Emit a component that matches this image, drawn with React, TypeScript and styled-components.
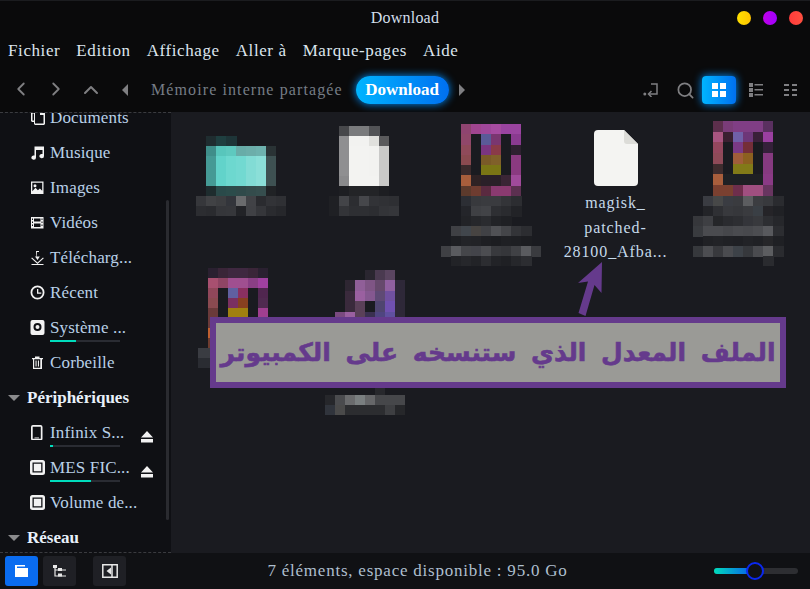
import React from 'react';
import styled, { createGlobalStyle } from 'styled-components';
import { ChevronLeft, ChevronRight, ChevronUp, Search } from 'lucide-react';

const GlobalStyle = createGlobalStyle`
  html, body {
    margin: 0;
    padding: 0;
    background: #0a0a0b;
  }
  * {
    box-sizing: border-box;
  }
`;

const FONT = `'Liberation Serif', 'Times New Roman', serif`;

const Window = styled.div`
  width: 810px;
  height: 589px;
  display: flex;
  flex-direction: column;
  overflow: hidden;
  background: #0a0a0b;
  border-top: 1px solid #1b1c1f;
  font-family: ${FONT};
  color: #d3dfec;
`;

const TitleBar = styled.header`
  height: 33px;
  flex: none;
  display: flex;
  align-items: center;
  justify-content: center;
  position: relative;
`;

const Title = styled.h1`
  margin: 0;
  font-size: 16px;
  font-weight: 400;
  letter-spacing: 0.2px;
`;

const Dots = styled.div`
  position: absolute;
  right: 7px;
  top: 10px;
  display: flex;
  gap: 12px;
`;

const Dot = styled.span<{ $color: string }>`
  width: 14px;
  height: 14px;
  border-radius: 50%;
  background: ${(p) => p.$color};
`;

const MenuBar = styled.nav`
  height: 34px;
  flex: none;
  display: flex;
  align-items: center;
  padding-left: 8px;
  gap: 16px;
`;

const MenuItem = styled.span`
  font-size: 17px;
  letter-spacing: 0.6px;
  color: #dce5ee;
`;

const Toolbar = styled.div`
  height: 44px;
  flex: none;
  display: flex;
  align-items: center;
  color: #7f7f82;
`;

const NavButton = styled.span`
  width: 35px;
  display: flex;
  justify-content: center;
`;

const NavGroup = styled.div`
  display: flex;
  padding: 0 13px 0 3px;
`;

const Caret = styled.svg`
  flex: none;
  width: 8px;
  height: 14px;
  fill: #7f7f82;
`;

const Crumb = styled.span`
  font-size: 16px;
  letter-spacing: 1.1px;
  color: #767d86;
  margin: 0 13px 0 22px;
`;

const ActiveCrumb = styled.span`
  width: 93px;
  height: 28px;
  border-radius: 14px;
  display: flex;
  align-items: center;
  justify-content: center;
  font-size: 17px;
  font-weight: 700;
  color: #fff;
  background: linear-gradient(90deg, #00b4ff, #0070f0);
  box-shadow: 0 0 8px #0090ff;
  margin-right: 9px;
`;

const ToolGroup = styled.div`
  margin-left: auto;
  display: flex;
  align-items: center;
  padding-right: 3px;
`;

const ToolButton = styled.span<{ $active?: boolean }>`
  width: 34px;
  height: 28px;
  margin-right: ${(p) => (p.$active ? '3px' : '0')};
  border-radius: 4px;
  display: flex;
  align-items: center;
  justify-content: center;
  color: ${(p) => (p.$active ? '#fff' : '#7f7f82')};
  background: ${(p) => (p.$active ? 'linear-gradient(90deg, #00b4ff, #0070f0)' : 'none')};
  box-shadow: ${(p) => (p.$active ? '0 0 8px #0090ff' : 'none')};
`;

const Body = styled.div`
  flex: 1;
  min-height: 0;
  display: flex;
`;

const Sidebar = styled.aside`
  width: 171px;
  flex: none;
  position: relative;
  overflow: hidden;
  background: #0f1014;
  border-top: 1px dashed #3a3b3f;
  border-bottom: 1px dashed #3a3b3f;
`;

const SideList = styled.ul`
  list-style: none;
  margin: -13px 0 0;
  padding: 0;
`;

const SideRow = styled.li`
  height: 35px;
  display: flex;
  align-items: center;
  padding-left: 30px;
  position: relative;
`;

const SideIcon = styled.svg`
  width: 15px;
  height: 15px;
  flex: none;
  margin-right: 5px;
  fill: #f2f2f2;
`;

const SideText = styled.span`
  font-size: 17px;
  letter-spacing: 0.15px;
  color: #b9d0e8;
  white-space: nowrap;
`;

const SideHeader = styled.li`
  height: 35px;
  display: flex;
  align-items: center;
  padding-left: 8px;
  font-size: 17px;
  font-weight: 700;
  color: #e8f0fa;
`;

const HeaderCaret = styled.span`
  width: 0;
  height: 0;
  border-left: 6px solid transparent;
  border-right: 6px solid transparent;
  border-top: 6px solid #8a8a8c;
  margin-right: 7px;
`;

const Usage = styled.div`
  position: absolute;
  left: 50px;
  bottom: 3px;
  width: 70px;
  height: 2px;
  background: #2a2c33;
`;

const UsageFill = styled.div`
  height: 100%;
  background: #00dcbc;
`;

const Eject = styled.svg`
  position: absolute;
  left: 140px;
  top: 15px;
  width: 14px;
  height: 14px;
  fill: #f2f2f2;
`;

const Scrollbar = styled.div`
  position: absolute;
  left: 166px;
  top: 87px;
  width: 3px;
  height: 320px;
  border-radius: 2px;
  background: #2a2b30;
`;

const Main = styled.main`
  flex: 1;
  position: relative;
  overflow: hidden;
  padding: 4px 0 0 7px;
  background: #1a1b20;
`;

const FileGrid = styled.div`
  display: grid;
  grid-template-columns: repeat(5, 125px);
  grid-template-rows: 152px auto;
  align-items: start;
`;

const FileCell = styled.div`
  display: flex;
  flex-direction: column;
  align-items: center;
`;

const IconSlot = styled.div`
  height: 80px;
  display: flex;
  align-items: flex-end;
`;

const PageIcon = styled.svg`
  width: 44px;
  height: 56px;
  margin-bottom: 10px;
`;

const FileName = styled.span`
  width: 122px;
  text-align: center;
  font-size: 16px;
  line-height: 24.5px;
  letter-spacing: 0.9px;
  color: #c5d9ea;
  margin-top: -5px;
`;

const Notice = styled.div`
  position: absolute;
  left: 39px;
  top: 205px;
  width: 576px;
  height: 71px;
  display: flex;
  align-items: center;
  justify-content: center;
  border: 6px solid #653a8c;
  background: #9a9a96;
  color: #653a8c;
  font-family: 'DejaVu Sans', sans-serif;
  font-size: 25px;
  font-weight: 700;
  word-spacing: 6px;
  white-space: nowrap;
  -webkit-text-stroke: 0.6px #653a8c;
`;

const Arrow = styled.svg`
  position: absolute;
  left: 400px;
  top: 145px;
  width: 40px;
  height: 65px;
`;

const StatusBar = styled.footer`
  height: 36px;
  flex: none;
  display: flex;
  align-items: center;
  padding-left: 5px;
  background: #101114;
`;

const StatusButton = styled.span<{ $active?: boolean; $gap: number }>`
  width: 33px;
  height: 30px;
  border-radius: 3px;
  display: flex;
  align-items: center;
  justify-content: center;
  background: ${(p) => (p.$active ? '#0a6cf0' : '#1f2025')};
  margin-right: ${(p) => p.$gap}px;
  flex: none;
`;

const StatusText = styled.span`
  position: absolute;
  left: 125px;
  right: 100px;
  text-align: center;
  font-size: 17px;
  letter-spacing: 0.77px;
  color: #aebfce;
`;

const Slider = styled.div`
  position: absolute;
  left: 714px;
  width: 84px;
  height: 6px;
  border-radius: 3px;
  background: #2d2e32;
`;

const SliderFill = styled.div`
  width: 42px;
  height: 100%;
  border-radius: 3px;
  background: linear-gradient(90deg, #00dcbc, #0a50f0);
`;

const SliderKnob = styled.span`
  position: absolute;
  left: 32px;
  top: -6px;
  width: 18px;
  height: 18px;
  border-radius: 50%;
  border: 2.5px solid #0a28f0;
  background: #101114;
`;

const MosaicSvg = styled.svg<{ $nudge: number; $top: number }>`
  display: block;
  flex: none;
  margin-left: ${(p) => p.$nudge}px;
  margin-top: ${(p) => p.$top}px;
`;

const _ = 'none';

// rows of blurred squares, the same 10px grid the censored picture uses
const Mosaic = ({
  rows,
  nudge = 0,
  top = 0,
  cellH = 10,
}: {
  rows: string[][];
  nudge?: number;
  top?: number;
  cellH?: number;
}) => {
  const cols = rows[0].length;
  const h = rows.length * cellH;
  return (
    <MosaicSvg
      $nudge={nudge}
      $top={top}
      width={cols * 10}
      height={h}
      viewBox={`0 0 ${cols * 10} ${h}`}
      shapeRendering='crispEdges'
    >
      {rows.map((row, y) =>
        row.map((color, x) =>
          color === _ ? null : (
            <rect key={`${x}-${y}`} x={x * 10} y={y * cellH} width={10.5} height={cellH + 0.5} fill={color} />
          ),
        ),
      )}
    </MosaicSvg>
  );
};

const folderIcon = [
  ['#1f2d30', '#1f3f40', '#1e3538', _, _, _, _],
  ['#3f8e8a', '#58c6bc', '#5ec9bf', '#68aca8', '#6caeaa', '#6eb2ae', '#2a3335'],
  ['#459a95', '#62d3ca', '#6dd8cf', '#72d9d1', '#82dcd5', '#8bdfd8', '#3e5152'],
  ['#459a95', '#62d3ca', '#6dd8cf', '#72d9d1', '#82dcd5', '#8bdfd8', '#3e5152'],
  ['#459a95', '#62d3ca', '#6dd8cf', '#72d9d1', '#82dcd5', '#8bdfd8', '#3e5152'],
  ['#1e2c2e', '#2a4a4a', '#2c4c4b', '#304a4a', '#344c4c', '#364e4e', '#202225'],
];
const folderLabel = [
  ['#36373b', '#414245', '#3d3e41', '#33353b', '#6a6b6d', '#414246', '#2a2b2f', '#323337', '#2f3034'],
  ['#2c2d31', '#2a2b2f', '#35363a', '#36373b', '#222327', '#404145', '#35363a', '#2a2b2f', '#26272b'],
];
const docIcon = [
  ['#47484b', '#7a7b7d', '#7a7b7d', '#525356', _],
  ['#8f8f91', '#f2f2f0', '#f2f2f0', '#e0e0dd', '#5a5a5c'],
  ['#8f8f91', '#f3f3f1', '#f3f3f1', '#f2f2f0', '#c9c9c8'],
  ['#8f8f91', '#f3f3f1', '#f3f3f1', '#f2f2f0', '#c9c9c8'],
  ['#8f8f91', '#f3f3f1', '#f3f3f1', '#f2f2f0', '#c9c9c8'],
  ['#8a8a8c', '#f3f3f1', '#f3f3f1', '#f3f3f1', '#c9c9c8'],
  ['#1d1e22', '#232427', '#232427', '#232427', '#1d1e22'],
];
const docLabel = [
  ['#1f2024', '#434448', '#2c2d31', '#46474b', '#323337', '#303135', '#2e2f33'],
  ['#1f2024', '#333438', '#2e2f33', '#2e2f33', '#2c2d31', '#333438', '#35363a'],
];
const thumbA = [
  ['#8f4470', '#a0458f', '#a0479a', '#a64ba0', '#9a44a0', '#9a44a0'],
  ['#90476a', '#1a1b20', '#5a5a98', '#7a3670', '#1a1b20', '#8a3a90'],
  ['#8f4a5a', '#1a1b20', '#7a3580', '#8a3a48', '#1a1b20', '#2e2030'],
  ['#8a4a50', '#1a1b20', '#7a5a28', '#80602a', '#1a1b20', '#8a3a80'],
  ['#3a2a2c', '#1a1b20', '#7a7515', '#7a7515', '#1a1b20', '#8a3a80'],
  ['#a85e3c', '#2e2224', '#2a2028', '#2a2028', '#3a2535', '#a04a9a'],
  ['#5c3a2c', '#6e3c30', '#5a2a40', '#8a3a70', '#8a3a70', '#5c3050'],
];
const labelA = [
  [_, _, '#2c2e34', '#38393d', '#3a3b3f', '#3a3b3f', '#333438', '#2c2d31', _, _],
  [_, _, '#24252a', '#3f4044', '#424347', '#2e2f33', '#2a2b2f', '#222327', _, _],
  [_, _, '#222327', '#26272b', '#2a2b2f', '#222327', '#1f2024', _, _, _],
  [_, '#3f4044', '#41464c', '#474442', '#404145', '#505155', '#444549', '#333438', '#2c2d31', _],
  [_, '#1e1f23', '#232428', '#222327', '#1e1f23', '#1c1d21', '#1f2024', '#1e1f23', '#1c1d21', _],
  ['#3f4044', '#5a5b5f', '#45464a', '#43444a', '#4c4d51', '#38393d', '#35363a', '#404145', '#5a5b5f', '#3a3b3f'],
  [_, '#222327', '#26272b', '#222327', '#2c2d31', '#222327', '#1f2024', '#26272b', '#2c2d31', _],
];
const thumbB = [
  ['#5c2f4c', '#7a3c78', '#803e85', '#803e85', '#803e85', '#5a3060'],
  ['#a85580', '#3a2030', '#7060a8', '#6d3678', '#3a2038', '#9a3fa0'],
  ['#94475e', '#1a1b20', '#7a3a85', '#742e38', '#1a1b20', '#35203a'],
  ['#8e4a58', '#1a1b20', '#a05e3a', '#8c6020', '#1a1b20', '#863a80'],
  ['#3e2c2e', '#1a1b20', '#827a18', '#827a18', '#1a1b20', '#863a80'],
  ['#a85e3c', '#1e2024', '#1e2024', '#1e2024', '#1e2024', '#8a3a85'],
  ['#7a4030', '#7a4030', '#6e2e4c', '#a04f80', '#a04f80', '#683560'],
];
const labelB = [
  [_, '#3a3c42', '#474848', '#3a3c42', '#3a3b3f', '#5c5d60', '#3c3d41', '#38393d', '#2a2b2f', _],
  [_, '#232428', '#2f3034', '#38393d', '#36373b', '#3a3b3f', '#3a3f45', '#252428', '#202125', _],
  ['#36373b', '#3e3f43', '#252629', '#2a2b2f', '#2d2e32', '#34353a', '#38393d', '#2d2e32', '#26272b', _],
  ['#393b3f', '#4a4b4f', '#4a4b4f', '#46474b', '#4a4b4f', '#48494d', '#4c4d51', '#58595d', '#2c2d31', _],
  [_, '#202125', '#222327', '#202125', '#1f2024', '#222327', '#202125', '#262629', '#1f2024', _],
  ['#36383c', '#4c4d51', '#38393d', '#4a4b4f', '#3d4248', '#36383c', '#4a4b4f', '#5c5d60', '#2a2b2f', _],
  [_, _, _, _, _, _, _, '#2a2b2f', _, _],
];
const thumbC = [
  ['#2a2030', '#3a2538', '#3f2840', '#3f2840', '#3a2538', '#2a2030'],
  ['#a85070', '#904565', '#a04f90', '#a04f90', '#8a3f85', '#a040a0'],
  ['#90475a', '#1a1b20', '#6060a0', '#8a3060', '#1a1b20', '#50264f'],
  ['#8a4a50', '#1a1b20', '#7a3060', '#884020', '#1a1b20', '#502a50'],
  ['#6a3a3a', '#1a1b20', '#a08010', '#a08010', '#1a1b20', '#a03f90'],
  ['#6a3a3a', '#1a1b20', '#1a1b20', '#1a1b20', '#1a1b20', '#a03f90'],
  ['#c06030', '#6e3c30', '#6e3c30', '#8a3a70', '#8a3a70', '#5c3050'],
  ['#6e3c30', '#6e3c30', '#6e3c30', '#8a3a70', '#8a3a70', '#5c3050'],
];
const labelC = [
  ['#3a3c42', '#3a3c42', '#3a3b3f', '#3a3b3f', '#3a3b3f', '#333438', '#2c2d31'],
  ['#2a2c32', '#2a2c32', '#2f3034', '#2f3034', '#2f3034', '#2c2d31', '#222327'],
];
const fillerD = ['#3a2a3c', '#3a2a3c', '#5a4058', '#5a4058', '#4f4580', '#6050a0', '#2e2838'];
const thumbD = [
  [_, _, _, '#2a2630', '#4a3a50', '#5a4560', _],
  [_, '#2e2632', '#905f98', '#7f5585', '#66496c', '#9060a0', '#2e2838'],
  [_, '#3a2a3c', '#9a60a0', '#855890', '#5f4a75', '#7050a0', '#2e2838'],
  [_, '#3a2a3c', '#5a4058', '#1a1b20', '#4f4570', '#7050b0', '#2e2838'],
  ['#7a4a80', '#9a60a0', '#5a4058', '#3a3050', '#4f4580', '#6050a0', '#2e2838'],
  fillerD,
  fillerD,
  fillerD,
  fillerD,
  fillerD,
  fillerD,
  [_, _, _, _, '#27282c', _, _],
];
const labelD = [
  ['#26272b', '#4a4b4e', '#6a6b6d', '#7a7f80', '#666769', '#46474a', '#46474a', '#46474a'],
  ['#30343c', '#4a4a4a', '#2c2d30', '#2c2d30', '#2c2d30', '#2c2d30', '#3e3f42', '#26272a'],
];

const NavCaret = ({ left }: { left?: boolean }) => (
  <Caret viewBox='0 0 8 14'>
    <path d={left ? 'M7 1v12L1 7z' : 'M1 1v12l6-6z'} />
  </Caret>
);

const icons: Record<string, React.ReactNode> = {
  documents: (
    <path fillRule='evenodd' d='M5 0h8.5l1.5 1.5V14l-1 1H5l-1-1v-2H2l-1-1V3l1-1h2V1zm0 1.5V13.5h8.5V5H10V1.5zM2.5 3.5v7H4v-7z' />
  ),
  music: <path d='M4.500 1.500h9.500V11a2.300 2.100 0 1 1-1.500-1.900V5H6V12.500a2.300 2.100 0 1 1-1.500-1.900z' />,
  image: (
    <path fillRule='evenodd' d='M1 1.500h12.500v12.500H1zm1.300 1.300v8.500l3.200-3.600 2.400 2.500 2-1.800 2.300 2.400V2.800zM5 4.200a1.500 1.500 0 1 1 0 3 1.500 1.500 0 0 1 0-3z' />
  ),
  video: (
    <path fillRule='evenodd' d='M1 2h12.500v11.500H1zm3 1.500v3h6.500v-3zm0 5v3.500h6.500V8.500zM2 3.500V5h1V3.500zm0 3V8h1V6.500zm0 3V11h1V9.500zm9.500-6V5h1V3.500zm0 3V8h1V6.500zm0 3V11h1V9.500z' />
  ),
  download: (
    <path d='M6 1h3v1H7v4.500h2.800L7.500 10 5 6.500h1.500zM2 7.500l5.500 5 5.500-5 .8.800-6.300 5.700-6.300-5.700zM1.500 14h12v1h-12z' />
  ),
  clock: (
    <path fillRule='evenodd' d='M7.500.5a7 7 0 1 1 0 14 7 7 0 0 1 0-14zm0 1.800a5.200 5.200 0 1 0 0 10.400 5.200 5.200 0 0 0 0-10.400zM7 4h1.300v3.500h3v1.200H7z' />
  ),
  disk: (
    <path fillRule='evenodd' d='M2.500 0h10A2 2 0 0 1 14.500 2v11a2 2 0 0 1-2 2h-10a2 2 0 0 1-2-2V2a2 2 0 0 1 2-2zM7.500 3a4 4 0 1 0 0 8 4 4 0 0 0 0-8zm0 2a2 2 0 1 1 0 4 2 2 0 0 1 0-4z' />
  ),
  trash: (
    <path fillRule='evenodd' d='M5 1.500h4.500v1.500h3.500v1.200h-1V14H3V4.200H2V3h3zM4.200 4.200v8.600h6.100V4.200zM5.500 5.500h1.100v6H5.500zm2.400 0H9v6H7.900z' />
  ),
  phone: (
    <path fillRule='evenodd' d='M3 0h7.500a2 2 0 0 1 2 2v11.500a2 2 0 0 1-2 2H3a2 2 0 0 1-2-2V2a2 2 0 0 1 2-2zm-.300 1.800v12h8.100v-12zM4.500 12.500h4.500v.7H4.500z' />
  ),
  card: (
    <path fillRule='evenodd' d='M2.500 0h10A2.500 2.500 0 0 1 15 2.500v10a2.500 2.500 0 0 1-2.500 2.500h-10A2.500 2.500 0 0 1 0 12.500v-10A2.500 2.500 0 0 1 2.500 0zM2.500 2.500v10h10v-10zM3.800 3.800h7.400v7.400H3.800z' />
  ),
};

const SideItem = ({
  icon,
  label,
  usage,
  eject,
}: {
  icon: string;
  label: string;
  usage?: number;
  eject?: boolean;
}) => (
  <SideRow>
    <SideIcon viewBox='0 0 15 15'>{icons[icon]}</SideIcon>
    <SideText>{label}</SideText>
    {usage !== undefined && (
      <Usage>
        <UsageFill style={{ width: `${usage}%` }} />
      </Usage>
    )}
    {eject && (
      <Eject viewBox='0 0 14 14'>
        <path d='M7 1l6 6.500H1zM1 9h12v3.500H1z' />
      </Eject>
    )}
  </SideRow>
);

const App = () => {
  return (
    <Window>
      <GlobalStyle />
      <TitleBar>
        <Title>Download</Title>
        <Dots>
          <Dot $color='linear-gradient(90deg, #ffe000, #ffc400)' />
          <Dot $color='linear-gradient(90deg, #c000e8, #a000ff)' />
          <Dot $color='linear-gradient(90deg, #ff3b3b, #ff5040)' />
        </Dots>
      </TitleBar>
      <MenuBar>
        <MenuItem>Fichier</MenuItem>
        <MenuItem>Edition</MenuItem>
        <MenuItem>Affichage</MenuItem>
        <MenuItem>Aller à</MenuItem>
        <MenuItem>Marque-pages</MenuItem>
        <MenuItem>Aide</MenuItem>
      </MenuBar>
      <Toolbar>
        <NavGroup>
          <NavButton>
            <ChevronLeft size={22} strokeWidth={2} />
          </NavButton>
          <NavButton>
            <ChevronRight size={22} strokeWidth={2} />
          </NavButton>
          <NavButton>
            <ChevronUp size={24} strokeWidth={2} />
          </NavButton>
        </NavGroup>
        <NavCaret left />
        <Crumb>Mémoire interne partagée</Crumb>
        <ActiveCrumb>Download</ActiveCrumb>
        <NavCaret />
        <ToolGroup>
          <ToolButton>
            <svg width='16' height='14' viewBox='0 0 16 14' fill='none' stroke='currentColor' strokeWidth='1.5'>
              <path d='M8 1h6v10H6' />
              <path d='M8.500 8L5.500 11l3 3' />
              <circle cx='1.800' cy='11' r='1.500' fill='currentColor' stroke='none' />
            </svg>
          </ToolButton>
          <ToolButton>
            <Search size={19} strokeWidth={2.2} />
          </ToolButton>
          <ToolButton $active>
            <svg width='14' height='14' viewBox='0 0 14 14' fill='currentColor'>
              <path d='M0 0h6v6H0zM8 0h6v6H8zM0 8h6v6H0zM8 8h6v6H8z' />
            </svg>
          </ToolButton>
          <ToolButton>
            <svg width='14' height='14' viewBox='0 0 14 14' fill='currentColor'>
              <path d='M0 0h4v4H0zM0 5h4v4H0zM0 10h4v4H0zM5.500 1h8.500v1.500H5.500zM5.500 6h8.500v1.500H5.500zM5.500 11h8.500v1.500H5.500z' />
            </svg>
          </ToolButton>
          <ToolButton>
            <svg width='13' height='12' viewBox='0 0 13 12' fill='currentColor'>
              <path d='M0 0h5v2H0zM8 0h5v2H8zM0 5h5v2H0zM8 5h5v2H8zM0 10h5v2H0zM8 10h5v2H8z' />
            </svg>
          </ToolButton>
        </ToolGroup>
      </Toolbar>
      <Body>
        <Sidebar>
          <SideList>
            <SideItem icon='documents' label='Documents' />
            <SideItem icon='music' label='Musique' />
            <SideItem icon='image' label='Images' />
            <SideItem icon='video' label='Vidéos' />
            <SideItem icon='download' label='Télécharg...' />
            <SideItem icon='clock' label='Récent' />
            <SideItem icon='disk' label='Système ...' usage={37} />
            <SideItem icon='trash' label='Corbeille' />
            <SideHeader>
              <HeaderCaret />
              Périphériques
            </SideHeader>
            <SideItem icon='phone' label='Infinix S...' usage={4} eject />
            <SideItem icon='card' label='MES FIC...' usage={58} eject />
            <SideItem icon='card' label='Volume de...' />
            <SideHeader>
              <HeaderCaret />
              Réseau
            </SideHeader>
          </SideList>
          <Scrollbar />
        </Sidebar>
        <Main>
          <FileGrid>
            <FileCell>
              <IconSlot>
                <Mosaic rows={folderIcon} />
              </IconSlot>
              <Mosaic rows={folderLabel} />
            </FileCell>
            <FileCell>
              <IconSlot>
                <Mosaic rows={docIcon} nudge={-4} />
              </IconSlot>
              <Mosaic rows={docLabel} nudge={-4} />
            </FileCell>
            <FileCell>
              <IconSlot>
                <Mosaic rows={thumbA} cellH={10.3} />
              </IconSlot>
              <Mosaic rows={labelA} />
            </FileCell>
            <FileCell>
              <IconSlot>
                <PageIcon viewBox='0 0 44 56'>
                  <path d='M4 0h26l14 14v38a4 4 0 0 1-4 4H4a4 4 0 0 1-4-4V4a4 4 0 0 1 4-4z' fill='#f4f4f2' />
                  <path d='M30 0l14 14H33a3 3 0 0 1-3-3z' fill='#dcdcd8' />
                </PageIcon>
              </IconSlot>
              <FileName>
                magisk_
                <br />
                patched-
                <br />
                28100_Afba...
              </FileName>
            </FileCell>
            <FileCell>
              <IconSlot>
                <Mosaic rows={thumbB} nudge={4} cellH={10.7} />
              </IconSlot>
              <Mosaic rows={labelB} nudge={4} />
            </FileCell>
            <FileCell>
              <Mosaic rows={thumbC} nudge={-6} />
              <Mosaic rows={labelC} nudge={-16} />
            </FileCell>
            <FileCell>
              <Mosaic rows={thumbD} nudge={8} top={2} cellH={10.4} />
              <Mosaic rows={labelD} nudge={-2} />
            </FileCell>
          </FileGrid>
          <Arrow viewBox='0 0 40 65'>
            <path d='M31 5L7 26l10-1.500L7.500 56l7 3 9-31 7 8z' fill='#653a8c' strokeLinejoin='round' />
          </Arrow>
          <Notice>الملف المعدل الذي ستنسخه على الكمبيوتر</Notice>
        </Main>
      </Body>
      <StatusBar>
        <StatusButton $active $gap={5}>
          <svg width='13' height='12' viewBox='0 0 13 12' fill='#fff'>
            <path d='M0 0h5l1 1.500H2V3h11v9H0zM3 0h7v1.500H6z' />
          </svg>
        </StatusButton>
        <StatusButton $gap={17}>
          <svg width='13' height='12' viewBox='0 0 13 12' fill='none' stroke='#e8e8e8' strokeWidth='1.200'>
            <path d='M2 0v11h11M2 5h11' />
            <path d='M0 0h4v3H0zM5 3h4v3H5zM5 8.500h4v3H5z' fill='#e8e8e8' stroke='none' />
          </svg>
        </StatusButton>
        <StatusButton $gap={0}>
          <svg width='16' height='14' viewBox='0 0 16 14' fill='none' stroke='#e8e8e8' strokeWidth='1.500'>
            <path d='M.8.8h14.400v12.400H.8z' />
            <path d='M9 3.500v7L4.500 7z' fill='#e8e8e8' stroke='none' />
            <path d='M10 1v12' />
          </svg>
        </StatusButton>
        <StatusText>7 éléments, espace disponible : 95.0 Go</StatusText>
        <Slider>
          <SliderFill />
          <SliderKnob />
        </Slider>
      </StatusBar>
    </Window>
  );
};

export default App;
